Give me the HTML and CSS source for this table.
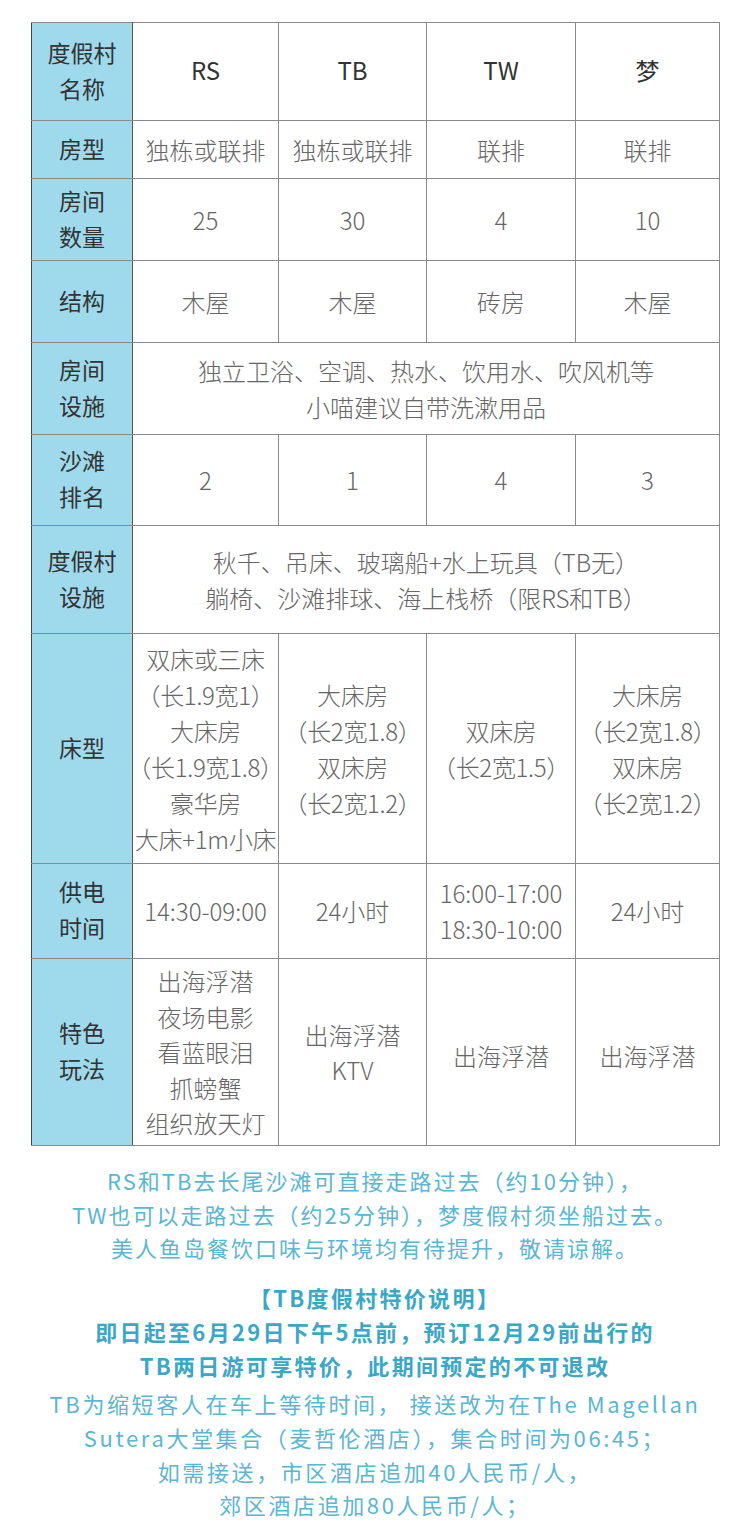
FILE: index.html
```html
<!DOCTYPE html>
<html lang="zh">
<head>
<meta charset="utf-8">
<link rel="stylesheet" href="styles.css">
</head>
<body>
<div class="page">
  <table class="resort">
    <colgroup>
      <col class="c-head"><col class="c1"><col class="c2"><col class="c3"><col class="c4">
    </colgroup>
    <tr class="r-name">
      <th>度假村<br>名称</th>
      <td class="name">RS</td><td class="name">TB</td><td class="name">TW</td><td class="name">梦</td>
    </tr>
    <tr class="r-type">
      <th>房型</th>
      <td>独栋或联排</td><td>独栋或联排</td><td>联排</td><td>联排</td>
    </tr>
    <tr class="r-count">
      <th>房间<br>数量</th>
      <td>25</td><td>30</td><td>4</td><td>10</td>
    </tr>
    <tr class="r-struct">
      <th>结构</th>
      <td>木屋</td><td>木屋</td><td>砖房</td><td>木屋</td>
    </tr>
    <tr class="r-room">
      <th>房间<br>设施</th>
      <td colspan="4">独立卫浴、空调、热水、饮用水、吹风机等<br>小喵建议自带洗漱用品</td>
    </tr>
    <tr class="r-beach">
      <th>沙滩<br>排名</th>
      <td>2</td><td>1</td><td>4</td><td>3</td>
    </tr>
    <tr class="r-fac">
      <th>度假村<br>设施</th>
      <td colspan="4">秋千、吊床、玻璃船+水上玩具（TB无）<br>躺椅、沙滩排球、海上栈桥（限RS和TB）</td>
    </tr>
    <tr class="r-bed">
      <th>床型</th>
      <td>双床或三床<br>（长1.9宽1）<br>大床房<br>（长1.9宽1.8）<br>豪华房<br>大床+1m小床</td>
      <td>大床房<br>（长2宽1.8）<br>双床房<br>（长2宽1.2）</td>
      <td>双床房<br>（长2宽1.5）</td>
      <td>大床房<br>（长2宽1.8）<br>双床房<br>（长2宽1.2）</td>
    </tr>
    <tr class="r-power">
      <th>供电<br>时间</th>
      <td>14:30-09:00</td><td>24小时</td><td>16:00-17:00<br>18:30-10:00</td><td>24小时</td>
    </tr>
    <tr class="r-play">
      <th>特色<br>玩法</th>
      <td>出海浮潜<br>夜场电影<br>看蓝眼泪<br>抓螃蟹<br>组织放天灯</td>
      <td>出海浮潜<br>KTV</td>
      <td class="low">出海浮潜</td>
      <td class="low">出海浮潜</td>
    </tr>
  </table>

  <div class="notes">
    <p class="note">RS和TB去长尾沙滩可直接走路过去（约10分钟），<br>TW也可以走路过去（约25分钟），梦度假村须坐船过去。<br>美人鱼岛餐饮口味与环境均有待提升，敬请谅解。</p>
    <p class="note strong">【TB度假村特价说明】<br>即日起至6月29日下午5点前，预订12月29前出行的<br>TB两日游可享特价，此期间预定的不可退改</p>
    <p class="note pickup">TB为缩短客人在车上等待时间， 接送改为在The Magellan<br>Sutera大堂集合（麦哲伦酒店），集合时间为06:45；<br>如需接送，市区酒店追加40人民币/人，<br>郊区酒店追加80人民币/人；</p>
  </div>
</div>
</body>
</html>
```

FILE: styles.css
```css
html, body {
  margin: 0;
  padding: 0;
  background: #ffffff;
}

.page {
  padding: 22px 31px 0 31px;
  font-family: "Noto Sans CJK SC", "Noto Sans", sans-serif;
}

.resort {
  width: 688px;
  border-collapse: collapse;
  table-layout: fixed;
  border: 1px solid #444;
}

.c-head { width: 101px; }
.c1 { width: 146px; }
.c2 { width: 148px; }
.c3 { width: 149px; }
.c4 { width: 144px; }

.resort th,
.resort td {
  border: 1px solid #8a8a8a;
  text-align: center;
  vertical-align: middle;
  font-size: 24px;
  line-height: 36px;
  padding: 0;
  white-space: nowrap;
}

.resort th {
  background: #9fd9ec;
  color: #333;
  font-weight: 400;
  border-left: 1px solid #444;
  border-right: 1px solid #555;
  font-size: 23px;
  padding-bottom: 4px;
}

.resort td {
  color: #666;
  font-weight: 300;
}

.resort td.name {
  color: #333;
  font-weight: 400;
  padding-bottom: 4px;
}

.r-name { height: 98px; }
.r-type { height: 58px; }
.r-count { height: 82px; }
.r-struct { height: 82px; }
.r-room { height: 92px; }
.r-beach { height: 91px; }
.r-fac { height: 108px; }
.r-bed { height: 230px; }
.r-power { height: 95px; }
.r-play { height: 187px; }

.r-bed td {
  font-feature-settings: "halt";
  letter-spacing: -0.3px;
}

.r-play td { line-height: 35.5px; }
.r-play td.low { padding-top: 8px; }

.notes {
  margin-top: 18px;
  text-align: center;
}

.note {
  margin: 0;
  font-size: 22px;
  line-height: 33.7px;
  letter-spacing: 2px;
  color: #5ab6d2;
}

.note.strong {
  margin-top: 16px;
  color: #3ba7c7;
  font-weight: 700;
  letter-spacing: 2.3px;
}

.note.pickup {
  margin-top: 5px;
  letter-spacing: 2.6px;
}
```
